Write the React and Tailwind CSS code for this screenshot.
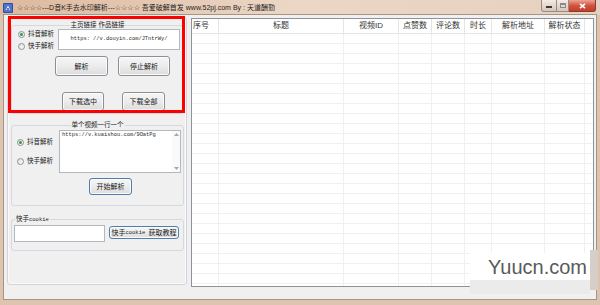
import React from "react";
import clsx from "clsx";

// Win7-style parser window: left control panel, right result list
const HEADERS = [
  { label: "序号", cls: "justify-start pl-[1px]" },
  { label: "标题" },
  { label: "视频ID" },
  { label: "点赞数" },
  { label: "评论数" },
  { label: "时长" },
  { label: "解析地址" },
  { label: "解析状态" },
  { label: "" },
];

const ROW_COUNT = 26;

function Btn({ children, className, focus }) {
  return (
    <div
      className={clsx(
        "flex items-center justify-center whitespace-nowrap rounded-[3px] border bg-gradient-to-b from-[#f6f6f6] via-[#ececec] to-[#dcdcdc] text-[7px] leading-none text-[#1a1a1a] shadow-[inset_0_0_0_1px_#fbfbfb]",
        focus ? "border-[#4a7fae]" : "border-[#8b9098]",
        className
      )}
    >
      {children}
    </div>
  );
}

function Radio({ checked, label, className }) {
  return (
    <div className={clsx("flex h-[8px] items-center gap-[3px]", className)}>
      <span className="flex h-[7px] w-[7px] items-center justify-center rounded-full border border-[#8e9094] bg-gradient-to-br from-[#dcdcdc] to-white">
        {checked && <span className="h-[3px] w-[3px] rounded-full bg-[#2f9a3c]" />}
      </span>
      <span className="text-[6.5px] leading-none text-[#1a1a1a]">{label}</span>
    </div>
  );
}

function Group({ title, center = true, className, children }) {
  return (
    <fieldset className={clsx("rounded-[3px] border border-[#d3d9de]", className)}>
      <legend
        className={clsx(
          "px-[1px] text-[6.5px] leading-[8px] text-[#1a1a1a]",
          center ? "mx-auto" : "ml-[3px]"
        )}
      >
        {title}
      </legend>
      {children}
    </fieldset>
  );
}

function TitleBar() {
  return (
    <div className="flex h-[15px] items-center bg-gradient-to-r from-[#ddb99e] via-[#ecd7c6] to-[#e6d0bf]">
      <svg className="ml-[3px] h-[10px] w-[10px]" viewBox="0 0 10 10">
        <rect x="0" y="0" width="10" height="10" rx="1" fill="#2c4fa8" />
        <rect x="1" y="1" width="8" height="8" fill="#4d74cf" />
        <path d="M3 7 L5 2.5 L7 7 Z" fill="#ffffff" />
        <circle cx="5" cy="6" r="1" fill="#2c4fa8" />
      </svg>
      <span className="ml-[4px] whitespace-nowrap text-[7px] leading-none text-[#1e1e1e]">
        ☆☆☆☆---D音K手去水印解析---☆☆☆☆ 吾爱破解首发 www.52pj.com By : 天道酬勤
      </span>
      <div className="mr-[4px] ml-auto flex self-start">
        <div className="flex h-[12px] w-[16px] items-end justify-center rounded-bl-[3px] border border-t-0 border-[#9a8a80] bg-gradient-to-b from-[#f3ebe5] to-[#d7c6ba] pb-[3px]">
          <span className="h-[2px] w-[6px] bg-[#3a3a3a]" />
        </div>
        <div className="flex h-[12px] w-[12px] items-center justify-center border border-t-0 border-l-0 border-[#9a8a80] bg-gradient-to-b from-[#f3ebe5] to-[#d7c6ba]">
          <span className="h-[5px] w-[6px] border border-t-2 border-[#8a8a8a]" />
        </div>
        <div className="flex h-[12px] w-[27px] items-center justify-center rounded-br-[3px] border border-t-0 border-l-0 border-[#8a3a30] bg-gradient-to-b from-[#e9a394] via-[#d2533f] to-[#c23f2b]">
          <svg className="h-[6px] w-[7px]" viewBox="0 0 7 6">
            <path d="M1 0.8 L6 5.2 M6 0.8 L1 5.2" stroke="#ffffff" strokeWidth="1.6" />
          </svg>
        </div>
      </div>
    </div>
  );
}

function LeftPanel() {
  return (
    <div className="mt-[2px] ml-[3px] flex h-[268px] w-[180px] flex-col rounded-[3px] border border-[#d0d5da] pt-[3px] pr-[2px] pl-[3px] shadow-[inset_0_0_0_1px_#fafafa]">
      {/* 主页链接 作品链接 */}
      <Group title="主页链接 作品链接" className="pb-[2px]">
        <div className="flex items-start">
          <div className="flex flex-col gap-[4px] pt-[1px] pl-[6px]">
            <Radio checked label="抖音解析" />
            <Radio label="快手解析" />
          </div>
          <div className="mr-[3px] ml-auto flex h-[21px] w-[122px] items-center justify-center border border-[#b3b8bf] bg-white font-['Liberation_Mono',monospace] text-[5.4px] text-[#2a2a2a]">
            https: //v.douyin.com/JTntrWy/
          </div>
        </div>
        <div className="mt-[6px] flex">
          <Btn className="ml-[43px] h-[20px] w-[53px]">解析</Btn>
          <Btn className="ml-[10px] h-[20px] w-[52px]">停止解析</Btn>
        </div>
        <div className="mt-[16px] flex">
          <Btn className="ml-[50px] h-[19px] w-[42px]">下载选中</Btn>
          <Btn className="ml-[18px] h-[19px] w-[43px]">下载全部</Btn>
        </div>
      </Group>

      {/* 单个视频一行一个 */}
      <Group title="单个视频一行一个" className="mt-[7px] pb-[10px]">
        <div className="flex items-start">
          <div className="flex flex-col gap-[11px] pt-[9px] pl-[5px]">
            <Radio checked label="抖音解析" />
            <Radio label="快手解析" />
          </div>
          <div className="mt-[1px] mr-[2px] ml-auto flex h-[43px] w-[122px] border border-[#b3b8bf] bg-white">
            <span className="flex-1 pt-[2px] pl-[2px] font-['Liberation_Mono',monospace] text-[5.4px] leading-none text-[#2a2a2a]">
              https://v.kuaishou.com/9OatPg
            </span>
            <div className="flex w-[8px] flex-col items-center justify-between bg-[#fafafa] py-[2px]">
              <svg className="h-[3px] w-[5px]" viewBox="0 0 5 3">
                <path d="M0 3 L2.5 0 L5 3 Z" fill="#a8a8a8" />
              </svg>
              <svg className="h-[3px] w-[5px]" viewBox="0 0 5 3">
                <path d="M0 0 L2.5 3 L5 0 Z" fill="#a8a8a8" />
              </svg>
            </div>
          </div>
        </div>
        <Btn focus className="mt-[5px] ml-[77px] h-[17px] w-[43px]">开始解析</Btn>
      </Group>

      {/* 快手cookie */}
      <Group title={<>快手<span className="font-['Liberation_Mono',monospace] text-[5.5px]">cookie</span></>} center={false} className="mt-[9px] pb-[8px]">
        <div className="flex items-start">
          <div className="mt-[1px] ml-[2px] h-[17px] w-[91px] border border-[#b3b8bf] bg-white" />
          <Btn focus className="mt-[2px] ml-[4px] h-[13px] w-[70px] text-[6.5px]">
            快手<span className="font-['Liberation_Mono',monospace] text-[5.5px]">cookie&nbsp;</span>获取教程
          </Btn>
        </div>
      </Group>
    </div>
  );
}

function ResultList() {
  return (
    <div className="mt-[3px] ml-[4px] h-[269px] w-[403px] overflow-hidden border border-[#8e939b] bg-white">
      <div className="grid grid-cols-[27px_125px_55px_33px_33px_27px_53px_40px_1fr]">
        {HEADERS.map((h, i) => (
          <div
            key={h.label + i}
            className={clsx(
              "flex h-[15px] items-center border-b border-[#e5e5e5] text-[8px] leading-none text-[#333]",
              i < 8 && "border-r",
              h.cls || "justify-center"
            )}
          >
            {h.label}
          </div>
        ))}
        {Array.from({ length: ROW_COUNT }, (_, r) =>
          HEADERS.map((h, i) => (
            <div
              key={`${r}-${i}`}
              className={clsx("h-[10px] border-b border-[#f0f0f0]", i < 8 && "border-r")}
            />
          ))
        )}
      </div>
    </div>
  );
}

export default function App() {
  return (
    <div className="relative h-[305px] w-[600px] overflow-hidden bg-[#dcc4b1] font-['Liberation_Sans','DejaVu_Sans','Noto_Sans_CJK_SC',sans-serif]">
      <TitleBar />
      <div className="mx-[4px] flex h-[284px] bg-[#f0f0f0] shadow-[0_0_0_1px_#a99482]">
        <LeftPanel />
        <ResultList />
      </div>

      {/* red annotation box */}
      <div className="pointer-events-none absolute top-[16px] left-[8px] h-[97px] w-[177px] border-[3px] border-[#ff0000]" />

      {/* watermark */}
      <div className="pointer-events-none absolute top-[253px] left-[470px] flex h-[27px] w-[120px] items-center justify-end bg-white pr-[3px] font-['Liberation_Sans',sans-serif] text-[20px] leading-none text-[#5a5a5a]">
        Yuucn.com
      </div>
      <div className="pointer-events-none absolute top-[280px] left-[470px] h-[14px] w-[120px] bg-[#ebebeb]" />
      <div className="pointer-events-none absolute top-[250px] left-[590px] h-[40px] w-[8px] bg-[#d6cfc8]" />
    </div>
  );
}
